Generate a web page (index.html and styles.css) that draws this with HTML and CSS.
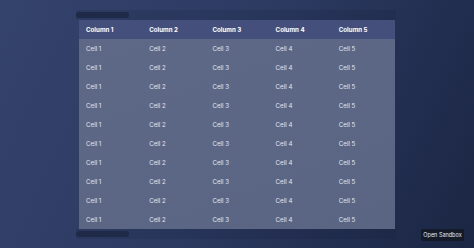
FILE: index.html
```html
<!DOCTYPE html>
<html>
<head>
<meta charset="utf-8">
<link rel="stylesheet" href="styles.css">
</head>
<body>
<div class="page">
  <div class="scroller">
    <div class="bar"><div class="thumb"></div></div>
    <table class="grid">
      <thead>
        <tr><th>Column 1</th><th>Column 2</th><th>Column 3</th><th>Column 4</th><th>Column 5</th></tr>
      </thead>
      <tbody>
        <tr><td>Cell 1</td><td>Cell 2</td><td>Cell 3</td><td>Cell 4</td><td>Cell 5</td></tr>
        <tr><td>Cell 1</td><td>Cell 2</td><td>Cell 3</td><td>Cell 4</td><td>Cell 5</td></tr>
        <tr><td>Cell 1</td><td>Cell 2</td><td>Cell 3</td><td>Cell 4</td><td>Cell 5</td></tr>
        <tr><td>Cell 1</td><td>Cell 2</td><td>Cell 3</td><td>Cell 4</td><td>Cell 5</td></tr>
        <tr><td>Cell 1</td><td>Cell 2</td><td>Cell 3</td><td>Cell 4</td><td>Cell 5</td></tr>
        <tr><td>Cell 1</td><td>Cell 2</td><td>Cell 3</td><td>Cell 4</td><td>Cell 5</td></tr>
        <tr><td>Cell 1</td><td>Cell 2</td><td>Cell 3</td><td>Cell 4</td><td>Cell 5</td></tr>
        <tr><td>Cell 1</td><td>Cell 2</td><td>Cell 3</td><td>Cell 4</td><td>Cell 5</td></tr>
        <tr><td>Cell 1</td><td>Cell 2</td><td>Cell 3</td><td>Cell 4</td><td>Cell 5</td></tr>
        <tr><td>Cell 1</td><td>Cell 2</td><td>Cell 3</td><td>Cell 4</td><td>Cell 5</td></tr>
      </tbody>
    </table>
    <div class="bar"><div class="thumb"></div></div>
  </div>
  <button class="sandbox">Open Sandbox</button>
</div>
</body>
</html>
```
FILE: styles.css
```css
html, body {
  margin: 0;
  padding: 0;
  width: 474px;
  height: 248px;
  overflow: hidden;
}
body {
  font-family: Inter, "Liberation Sans", sans-serif;
  background: linear-gradient(115deg, #34436c 0%, #2d3b63 45%, #232f51 75%, #1b2644 100%);
}
.page {
  position: relative;
  height: 248px;
  padding: 10px 0 0 76px;
  box-sizing: border-box;
}
.scroller {
  width: 320px;
  display: flex;
  flex-direction: column;
}
.bar {
  height: 10px;
  background: rgba(20, 30, 55, 0.15);
  display: flex;
  align-items: center;
}
.thumb {
  width: 53px;
  height: 6px;
  border-radius: 3px;
  background: #1f2a48;
}
.grid {
  margin-left: 3px;
  width: 316px;
  border-collapse: collapse;
  table-layout: fixed;
  background: linear-gradient(160deg, #5e6988 0%, #5a6584 100%);
}
.grid th, .grid td {
  height: 19px;
  padding: 0 0 0 7px;
  text-align: left;
  vertical-align: middle;
  font-size: 6.2px;
  line-height: 19px;
}
.grid th {
  background: #44507b;
  color: #ffffff;
  font-weight: 700;
}
.grid td {
  color: #e3e6ef;
  font-weight: 400;
}
.sandbox {
  position: absolute;
  right: 10px;
  bottom: 7px;
  width: 43px;
  height: 12px;
  padding: 0;
  border: 0;
  border-radius: 2px;
  background: #141a28;
  color: #e6e8ee;
  font-family: Inter, "Liberation Sans", sans-serif;
  font-size: 5.5px;
}
```
